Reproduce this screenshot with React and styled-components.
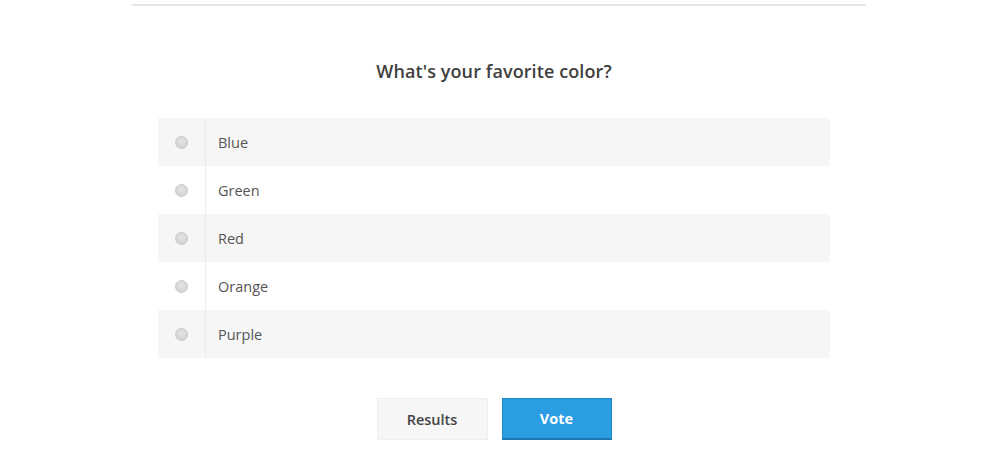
import styled, { createGlobalStyle } from "styled-components";

const GlobalStyle = createGlobalStyle`
  body {
    margin: 0;
    background: #fff;
    font-family: "Open Sans", "Noto Sans", sans-serif;
  }
`;

const options = ["Blue", "Green", "Red", "Orange", "Purple"];

const App = () => {
  return (
    <Page>
      <GlobalStyle />
      <Divider />
      <Title>What's your favorite color?</Title>
      <Options>
        {options.map((name, i) => (
          <Row key={name} striped={i % 2 === 0}>
            <RadioCell>
              <Radio type="radio" name="color" />
            </RadioCell>
            <Label>{name}</Label>
          </Row>
        ))}
      </Options>
      <Actions>
        <ResultsButton>Results</ResultsButton>
        <VoteButton>Vote</VoteButton>
      </Actions>
    </Page>
  );
};

const Page = styled.div`
  width: 1000px;
  height: 471px;
  display: flex;
  flex-direction: column;
  align-items: center;
  padding-top: 4px;
  box-sizing: border-box;
`;

const Divider = styled.div`
  width: 734px;
  height: 2px;
  margin-left: -2px;
  background: #e6e6e6;
`;

const Title = styled.h2`
  margin: 53px 0 0 -12px;
  font-size: 18px;
  font-weight: 600;
  color: #404040;
  line-height: 24px;
  letter-spacing: 0.1px;
`;

const Options = styled.div`
  width: 672px;
  margin: 35px 0 0 -12px;
  display: flex;
  flex-direction: column;
`;

const Row = styled.label`
  display: flex;
  align-items: stretch;
  height: 48px;
  background: ${(p) => (p.striped ? "#f6f6f6" : "#fff")};
`;

const RadioCell = styled.div`
  width: 47px;
  display: flex;
  align-items: center;
  justify-content: center;
  border-right: 1px solid #ececec;
`;

const Radio = styled.input`
  appearance: none;
  margin: 0;
  width: 13px;
  height: 13px;
  border-radius: 50%;
  border: 1px solid #c9c9c9;
  background: radial-gradient(circle at 50% 40%, #e4e4e4, #cfcfcf);
  box-sizing: border-box;
`;

const Label = styled.span`
  display: flex;
  align-items: center;
  padding-left: 12px;
  font-size: 14.5px;
  color: #555;
`;

const Actions = styled.div`
  display: flex;
  gap: 14px;
  margin: 40px 0 0 -12px;
`;

const ResultsButton = styled.button`
  width: 111px;
  height: 42px;
  border: 1px solid #efefef;
  background: #f6f6f6;
  color: #444;
  font-family: inherit;
  font-size: 14.5px;
  font-weight: 600;
`;

const VoteButton = styled.button`
  width: 110px;
  height: 42px;
  border: 1px solid #1f86c6;
  border-bottom: 2px solid #1b78b3;
  background: #2a9de3;
  color: #fff;
  font-family: inherit;
  font-size: 14.5px;
  font-weight: 700;
`;

export default App;
